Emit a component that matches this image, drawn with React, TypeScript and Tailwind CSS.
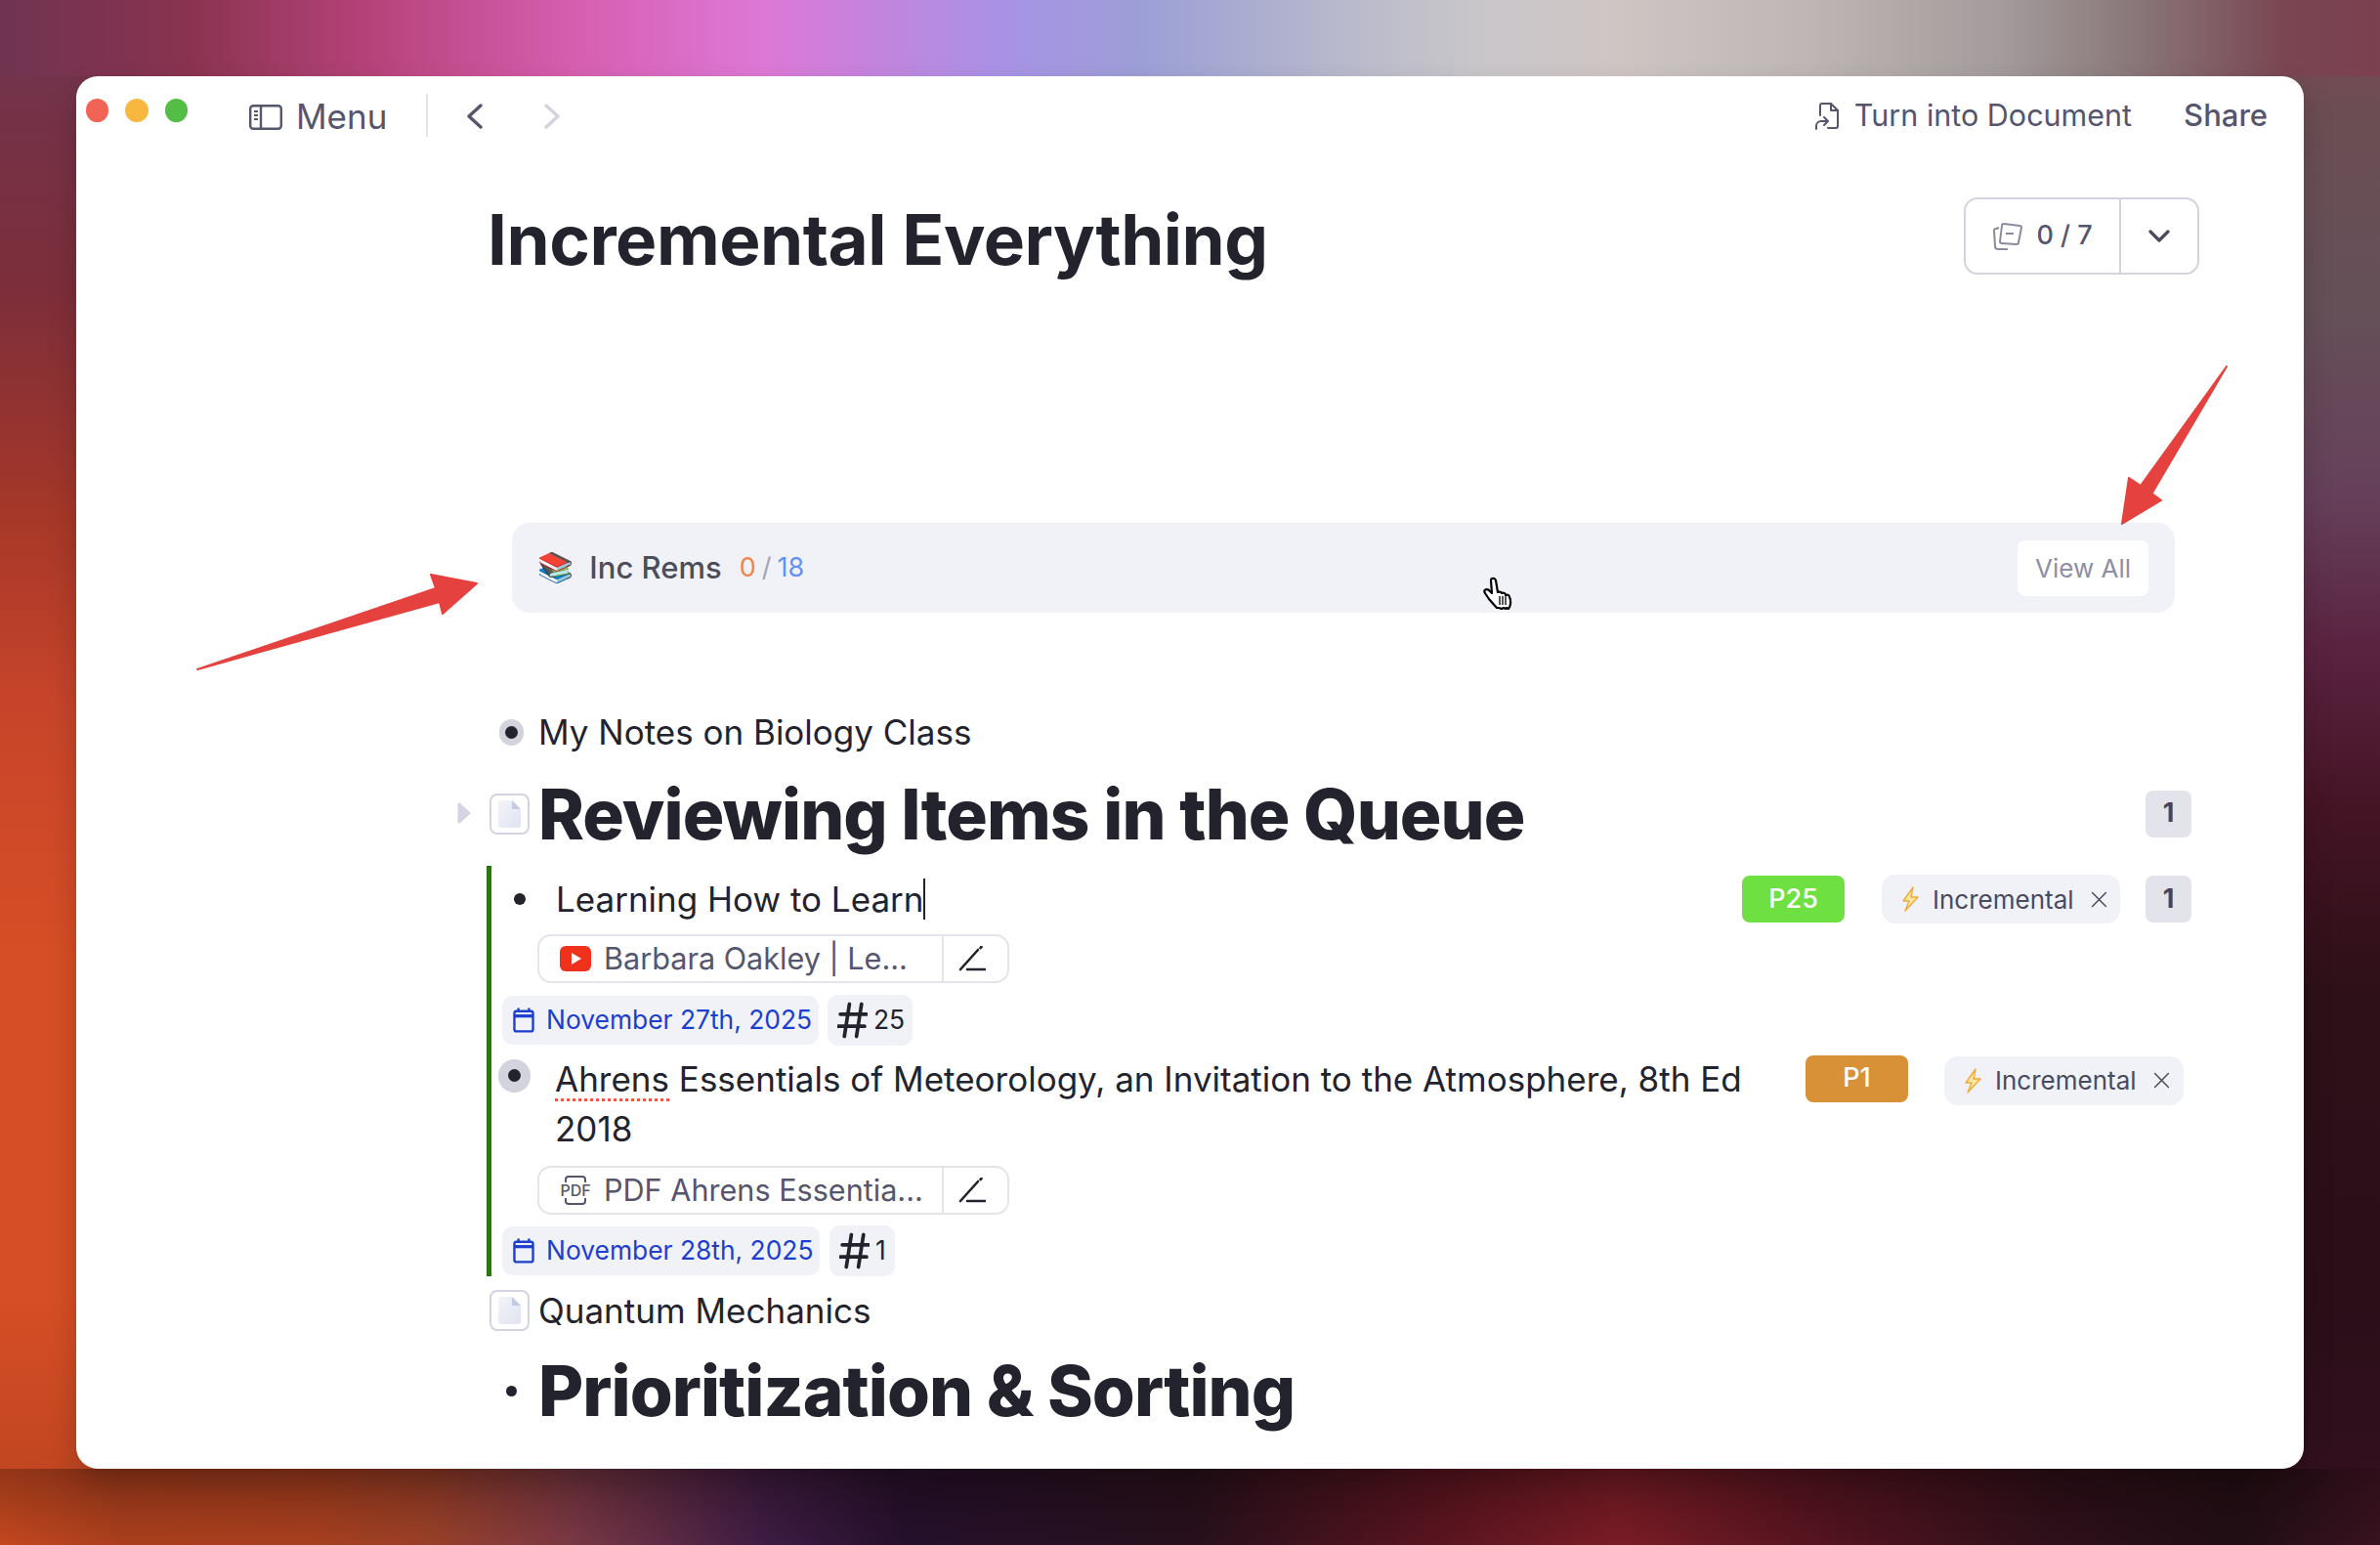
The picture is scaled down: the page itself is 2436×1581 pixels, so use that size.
import React from "react";

const Radio = ({ big }: { big?: boolean }) => (
  <span className={`flex items-center justify-center rounded-full bg-[#d3d3de] ${big ? "w-[33px] h-[34px]" : "w-[25px] h-[27px]"}`}>
    <span className="h-[13px] w-[13px] rounded-full bg-[#23232e]" />
  </span>
);

const DocBox = () => (
  <span className="flex h-[42px] w-[41px] shrink-0 items-center justify-center rounded-[8px] border-2 border-[#d3d3e2] bg-white">
    <svg width="24" height="30" viewBox="0 0 24 30">
      <defs>
        <linearGradient id="docg" x1="0" y1="0" x2="1" y2="1">
          <stop offset="0" stopColor="#f4f5fa" />
          <stop offset="1" stopColor="#dfe3f0" />
        </linearGradient>
      </defs>
      <path d="M3 1h11l9 9v16a3 3 0 0 1-3 3H3a3 3 0 0 1-3-3V4a3 3 0 0 1 3-3z" fill="url(#docg)" />
      <path d="M14 1l9 9h-9z" fill="#c3cbe2" />
    </svg>
  </span>
);

const Bolt = () => (
  <svg className="shrink-0" width="18" height="26" viewBox="0 0 18 26">
    <path d="M12 1L2 15h6L4 25l13-14h-7z" fill="#fde6a0" stroke="#f2a93b" strokeWidth="1.4" strokeLinejoin="round" />
  </svg>
);

const X = () => (
  <svg width="17" height="17" viewBox="0 0 16 16" stroke="#4a4a5e" strokeWidth="1.4" strokeLinecap="round">
    <path d="M1.5 1.5l13 13M14.5 1.5l-13 13" />
  </svg>
);

const TagPill = ({ w }: { w: string }) => (
  <span className={`flex h-[50px] items-center rounded-[14px] bg-[#f1f2f8] pl-[20px] text-[26px] text-[#4a4a5e] ${w}`}>
    <Bolt />
    <span className="ml-[14px]">Incremental</span>
    <span className="ml-[17px]"><X /></span>
  </span>
);

const Num = () => (
  <span className="flex h-[48px] w-[47px] items-center justify-center rounded-[8px] bg-[#e2e3eb] text-[27px] font-bold text-[#45455a]">1</span>
);

const Pen = () => (
  <svg className="mr-[8px]" width="28" height="26" viewBox="0 0 28 26" fill="none" stroke="#23232e" strokeWidth="2.6" strokeLinecap="round">
    <path d="M2 24L20 4" />
    <path d="M22.5 2l1 -1" />
    <path d="M9 24h18" />
  </svg>
);

const Source = ({ icon, text }: { icon: React.ReactNode; text: string }) => (
  <div className="flex h-[50px] w-[483px] items-center rounded-[14px] border-2 border-[#e4e4ec] text-[30.6px] text-[#55556d]">
    <span className="ml-[21px] flex w-[32px] shrink-0 justify-center">{icon}</span>
    <span className="ml-[13px] flex-1 whitespace-nowrap">{text}</span>
    <span className="flex h-full w-[67px] shrink-0 items-center justify-center border-l-2 border-[#e4e4ec]"><Pen /></span>
  </div>
);

const Cal = () => (
  <svg className="shrink-0" width="24" height="26" viewBox="0 0 20 24" fill="none" stroke="#1c3fd0" strokeWidth="2.2">
    <rect x="1.2" y="3.5" width="17.6" height="19" rx="2" />
    <path d="M1.2 8h17.6" strokeWidth="3" />
    <path d="M5 0.5v4M15 0.5v4" />
  </svg>
);

const DateRow = ({ date, n, w, nw, gap }: { date: string; n: string; w: string; nw: string; gap: string }) => (
  <div className={`flex items-center ${gap}`}>
    <span className={`flex h-[50px] items-center rounded-[10px] bg-[#f1f2f8] pl-[10px] text-[26.4px] text-[#1c3fd0] ${w}`}>
      <Cal />
      <span className="ml-[11px] whitespace-nowrap">{date}</span>
    </span>
    <span className={`flex h-[52px] items-center rounded-[10px] bg-[#f1f2f8] pl-[10px] text-[26.4px] text-[#23232e] ${nw}`}>
      <svg className="shrink-0" width="31" height="38" viewBox="0 0 30 36" fill="none" stroke="#23232e" strokeWidth="3.6" strokeLinecap="round">
        <path d="M12 2L7 34M24 2l-5 32M3 12h26M1 24h26" />
      </svg>
      <span className="ml-[6px]">{n}</span>
    </span>
  </div>
);

export default function App() {
  return (
    <div className="h-[1581px] w-[2436px] overflow-hidden p-[78px] font-['Inter',sans-serif] [background:linear-gradient(to_right,#6f3450_0%,#8a3350_8%,#b8447c_16%,#d65eb0_24%,#dd78d6_32%,#a892e6_42%,#9c9fd6_48%,#b7b8cc_56%,#c9c6ca_62%,#cfc6c4_68%,#bdb6b4_76%,#a49c9c_84%,#887578_90%,#7a4652_96%,#7c4050_100%)_top/100%_78px_no-repeat,linear-gradient(to_bottom,rgba(20,5,5,0.28),rgba(20,5,5,0))_bottom/100%_78px_no-repeat,linear-gradient(to_right,#c4481f_0%,#ab3f1e_5%,#a83f1e_13%,#9a4028_18%,#7a3844_24%,#3e1c44_32%,#25102c_38%,#26101c_50%,#58141f_60%,#7a1c26_68%,#561420_76%,#2e101a_86%,#200e14_94%,#381220_100%)_bottom/100%_78px_no-repeat,linear-gradient(to_bottom,#6f3550_0%,#7d2e3a_19%,#a83828_34%,#c8452a_46%,#d64e25_62%,#d64e25_84%,#b8431f_100%)_left/120px_100%_no-repeat,linear-gradient(to_bottom,#7e4652_0%,#6a4e54_8%,#655058_20%,#66405a_32%,#5a2340_42%,#451425_52%,#2e1018_64%,#2a0e18_84%,#351020_100%)_right/120px_100%_no-repeat]">
      <div className="relative flex h-[1425px] w-[2280px] flex-col rounded-[22px] bg-white text-[#23232e] shadow-[0_14px_30px_rgba(0,0,0,0.18)]">
        {/* Title bar */}
        <header className="flex h-[80px] items-center text-[35px] text-[#55556d]">
          <div className="ml-[10px] flex w-[104px] gap-[17px] self-start pt-[23px]">
            <span className="h-[24px] w-[24px] rounded-full bg-[#f16455]" />
            <span className="h-[24px] w-[24px] rounded-full bg-[#f8b73e]" />
            <span className="h-[24px] w-[24px] rounded-full bg-[#54bd45]" />
          </div>
          <svg className="ml-[63px] mt-[3px]" width="34" height="26" viewBox="0 0 34 26" fill="none" stroke="#55556d" strokeWidth="2.4">
            <rect x="1.2" y="1.2" width="31.6" height="23.6" rx="3" />
            <path d="M12 1v24" />
            <path d="M5 7h4M5 11h4M5 15h4" strokeWidth="2" />
          </svg>
          <span className="ml-[14px] mt-[2px]">Menu</span>
          <span className="ml-[40px] h-[44px] w-[2px] bg-[#e2e2ea]" />
          <svg className="ml-[39px] mt-[2px]" width="18" height="26" viewBox="0 0 18 26" fill="none" stroke="#55556d" strokeWidth="3.4" strokeLinecap="round" strokeLinejoin="round">
            <path d="M15 2L3 13l12 11" />
          </svg>
          <svg className="ml-[61px] mt-[2px]" width="18" height="26" viewBox="0 0 18 26" fill="none" stroke="#d3d3de" strokeWidth="3.4" strokeLinecap="round" strokeLinejoin="round">
            <path d="M3 2l12 11L3 24" />
          </svg>
          <svg className="ml-auto mt-[2px]" width="26" height="30" viewBox="0 0 26 30" fill="none" stroke="#55556d" strokeWidth="2" strokeLinejoin="round" strokeLinecap="round">
            <path d="M6 14V4a2 2 0 0 1 2-2h9l7 7v16a2 2 0 0 1-2 2h-8" />
            <path d="M17 2v7h7" />
            <path d="M2 28v-3a5 5 0 0 1 5-5h6M10 16l4 4-4 4" />
          </svg>
          <span className="ml-[15px] whitespace-nowrap text-[30.5px]">Turn into Document</span>
          <span className="ml-[53px] mr-[37px] text-[31px] font-medium">Share</span>
        </header>

        {/* Document title row */}
        <div className="relative mt-[47px] flex h-[80px] items-start pl-[421px]">
          <h1 className="whitespace-nowrap text-[71px] font-bold leading-[80px] tracking-[-0.5px]">Incremental Everything</h1>
          <div className="absolute right-[107px] top-[-3px] flex h-[79px] w-[241px] rounded-[14px] border-2 border-[#d3d3e2] text-[27px] font-medium text-[#55556d]">
            <div className="flex w-[159px] items-center justify-center gap-[13px] border-r-2 border-[#d3d3e2]">
              <svg width="32" height="32" viewBox="0 0 32 32" fill="none" stroke="#8a8aa0" strokeWidth="2" strokeLinejoin="round">
                <path d="M7 7l-3 1a2 2 0 0 0-2 2l1 16a3 3 0 0 0 3 3h10" />
                <path d="M12 3l16 2a2 2 0 0 1 2 2l-3 15a2 2 0 0 1-2 2L10 23a2 2 0 0 1-2-2l2-16a2 2 0 0 1 2-2z" />
                <path d="M14 13h8" />
              </svg>
              <span>0 / 7</span>
            </div>
            <div className="flex flex-1 items-center justify-center">
              <svg width="22" height="14" viewBox="0 0 22 14" fill="none" stroke="#4a4a5e" strokeWidth="3.2" strokeLinecap="round" strokeLinejoin="round">
                <path d="M2 2l9 9 9-9" />
              </svg>
            </div>
          </div>
        </div>

        {/* Inc Rems */}
        <div className="ml-[446px] mr-[132px] mt-[250px] flex h-[92px] items-center rounded-[18px] bg-[#f1f2f8] pl-[26px] pr-[27px]">
          <span className="font-['Noto_Color_Emoji','DejaVu_Sans',sans-serif] text-[30px] leading-none">📚</span>
          <span className="ml-[16px] text-[31px] font-medium text-[#4d4d5a]">Inc Rems</span>
          <span className="ml-[18px] text-[27px] text-[#f0854a]">0</span>
          <span className="ml-[6px] text-[27px] text-[#a3a3b5]">/</span>
          <span className="ml-[6px] text-[27px] text-[#6391f5]">18</span>
          <span className="ml-auto flex h-[57px] w-[134px] items-center justify-center rounded-[8px] bg-white text-[26px] text-[#8e8ea4]">View All</span>
        </div>

        {/* Outline */}
        <div className="mt-[96px] flex items-center pl-[433px] text-[35px]">
          <Radio />
          <span className="ml-[15px]">My Notes on Biology Class</span>
        </div>

        <div className="relative mt-[17px] flex h-[80px] items-center pl-[423px]">
          <svg className="absolute left-[390px] top-[28px]" width="14" height="22" viewBox="0 0 14 22">
            <path d="M2 2l10 9-10 9z" fill="#d3d3e2" stroke="#d3d3e2" strokeWidth="3" strokeLinejoin="round" />
          </svg>
          <DocBox />
          <h2 className="ml-[9px] whitespace-nowrap text-[71px] font-extrabold leading-[80px] tracking-[-0.93px]">Reviewing Items in the Queue</h2>
          <span className="ml-auto mr-[115px]"><Num /></span>
        </div>

        {/* Green-barred block */}
        <div className="ml-[420px] mr-[115px] mt-[13px] flex h-[420px] flex-col border-l-[5px] border-[#2f7317] pt-[7px]">
          <div className="flex h-[58px] items-center">
            <span className="ml-[23px] h-[12px] w-[12px] rounded-full bg-[#23232e]" />
            <span className="ml-[31px] flex items-center text-[35px]">Learning How to Learn<span className="h-[42px] w-[2px] bg-[#23232e]" /></span>
            <span className="ml-auto flex h-[48px] w-[105px] items-center justify-center rounded-[8px] bg-[#6fe041] text-[27px] font-medium text-white">P25</span>
            <span className="ml-[38px]"><TagPill w="w-[244px]" /></span>
            <span className="ml-[26px]"><Num /></span>
          </div>
          <div className="ml-[47px] mt-[8px]">
            <Source
              text="Barbara Oakley | Le..."
              icon={
                <svg width="32" height="26" viewBox="0 0 32 26">
                  <rect width="32" height="26" rx="6" fill="#ee321c" />
                  <path d="M12 7l10 6-10 6z" fill="#fff" />
                </svg>
              }
            />
          </div>
          <div className="ml-[11px] mt-[12px]">
            <DateRow date="November 27th, 2025" n="25" w="w-[324px]" nw="w-[87px]" gap="gap-[9px]" />
          </div>
          <div className="relative mt-[9px] flex items-start pl-[65px] pr-[8px]">
            <span className="absolute left-[7px] top-[5px]"><Radio big /></span>
            <p className="w-[1230px] text-[35px] leading-[51px]">
              <span className="underline decoration-[#f0574a] decoration-dotted decoration-[3px] underline-offset-[7px]">Ahrens</span> Essentials of Meteorology, an Invitation to the Atmosphere, 8th Ed 2018
            </p>
            <span className="ml-auto mt-[1px] flex h-[48px] w-[105px] items-center justify-center rounded-[8px] bg-[#d99138] text-[27px] font-medium text-white">P1</span>
            <span className="ml-[37px] mt-[2px]"><TagPill w="w-[245px]" /></span>
          </div>
          <div className="ml-[47px] mt-[12px]">
            <Source
              text="PDF Ahrens Essentia..."
              icon={
                <span className="relative flex h-[30px] w-[30px] items-center justify-center rounded-[6px]">
                  <svg className="absolute inset-0" width="30" height="30" viewBox="0 0 30 30" fill="none" stroke="#55556d" strokeWidth="2">
                    <path d="M5 7V4a3 3 0 0 1 3-3h14a3 3 0 0 1 3 3v3M5 23v3a3 3 0 0 0 3 3h14a3 3 0 0 0 3-3v-3" />
                  </svg>
                  <span className="relative text-[16px] font-medium leading-none">PDF</span>
                </span>
              }
            />
          </div>
          <div className="ml-[11px] mt-[11px]">
            <DateRow date="November 28th, 2025" n="1" w="w-[325px]" nw="w-[67px]" gap="gap-[10px]" />
          </div>
        </div>

        <div className="mt-[9px] flex items-center pl-[423px] text-[35px]">
          <DocBox />
          <span className="ml-[9px]">Quantum Mechanics</span>
        </div>

        <div className="mt-[16px] flex h-[80px] items-center pl-[440px]">
          <span className="h-[11px] w-[11px] rounded-full bg-[#23232e]" />
          <h2 className="ml-[22px] whitespace-nowrap text-[71px] font-extrabold leading-[80px] tracking-[-0.93px]">Prioritization &amp; Sorting</h2>
        </div>

        {/* Annotation arrows and cursor lying over the content */}
        <svg className="pointer-events-none absolute left-0 top-0" width="2280" height="1425" viewBox="0 0 2280 1425">
          <path d="M124 607L368 524L363 510L410 519L375 550L372 538Z" fill="#e5423f" strokeLinejoin="round" stroke="#e5423f" strokeWidth="2" />
          <path d="M2201 297L2124.5 427L2134 434L2094 458L2101 411L2113 419Z" fill="#e5423f" strokeLinejoin="round" stroke="#e5423f" strokeWidth="2" />
          <path d="M1448 516c0-3 4-3 5 0l2 12c2-1 4 0 4 1c2-1 4 0 4 2c2-1 4 0 4 2c2 4 1 10-1 12l-2-1-1 1-2-1-2 1-3-1-2 0-8-9-4-6c-2-3 1-5 4-3l3 3z" fill="#fff" stroke="#000" strokeWidth="2.2" strokeLinejoin="round" />
          <path d="M1457 532v9M1460 532v9M1463 532v9" stroke="#000" strokeWidth="1.3" />
        </svg>
      </div>
    </div>
  );
}
